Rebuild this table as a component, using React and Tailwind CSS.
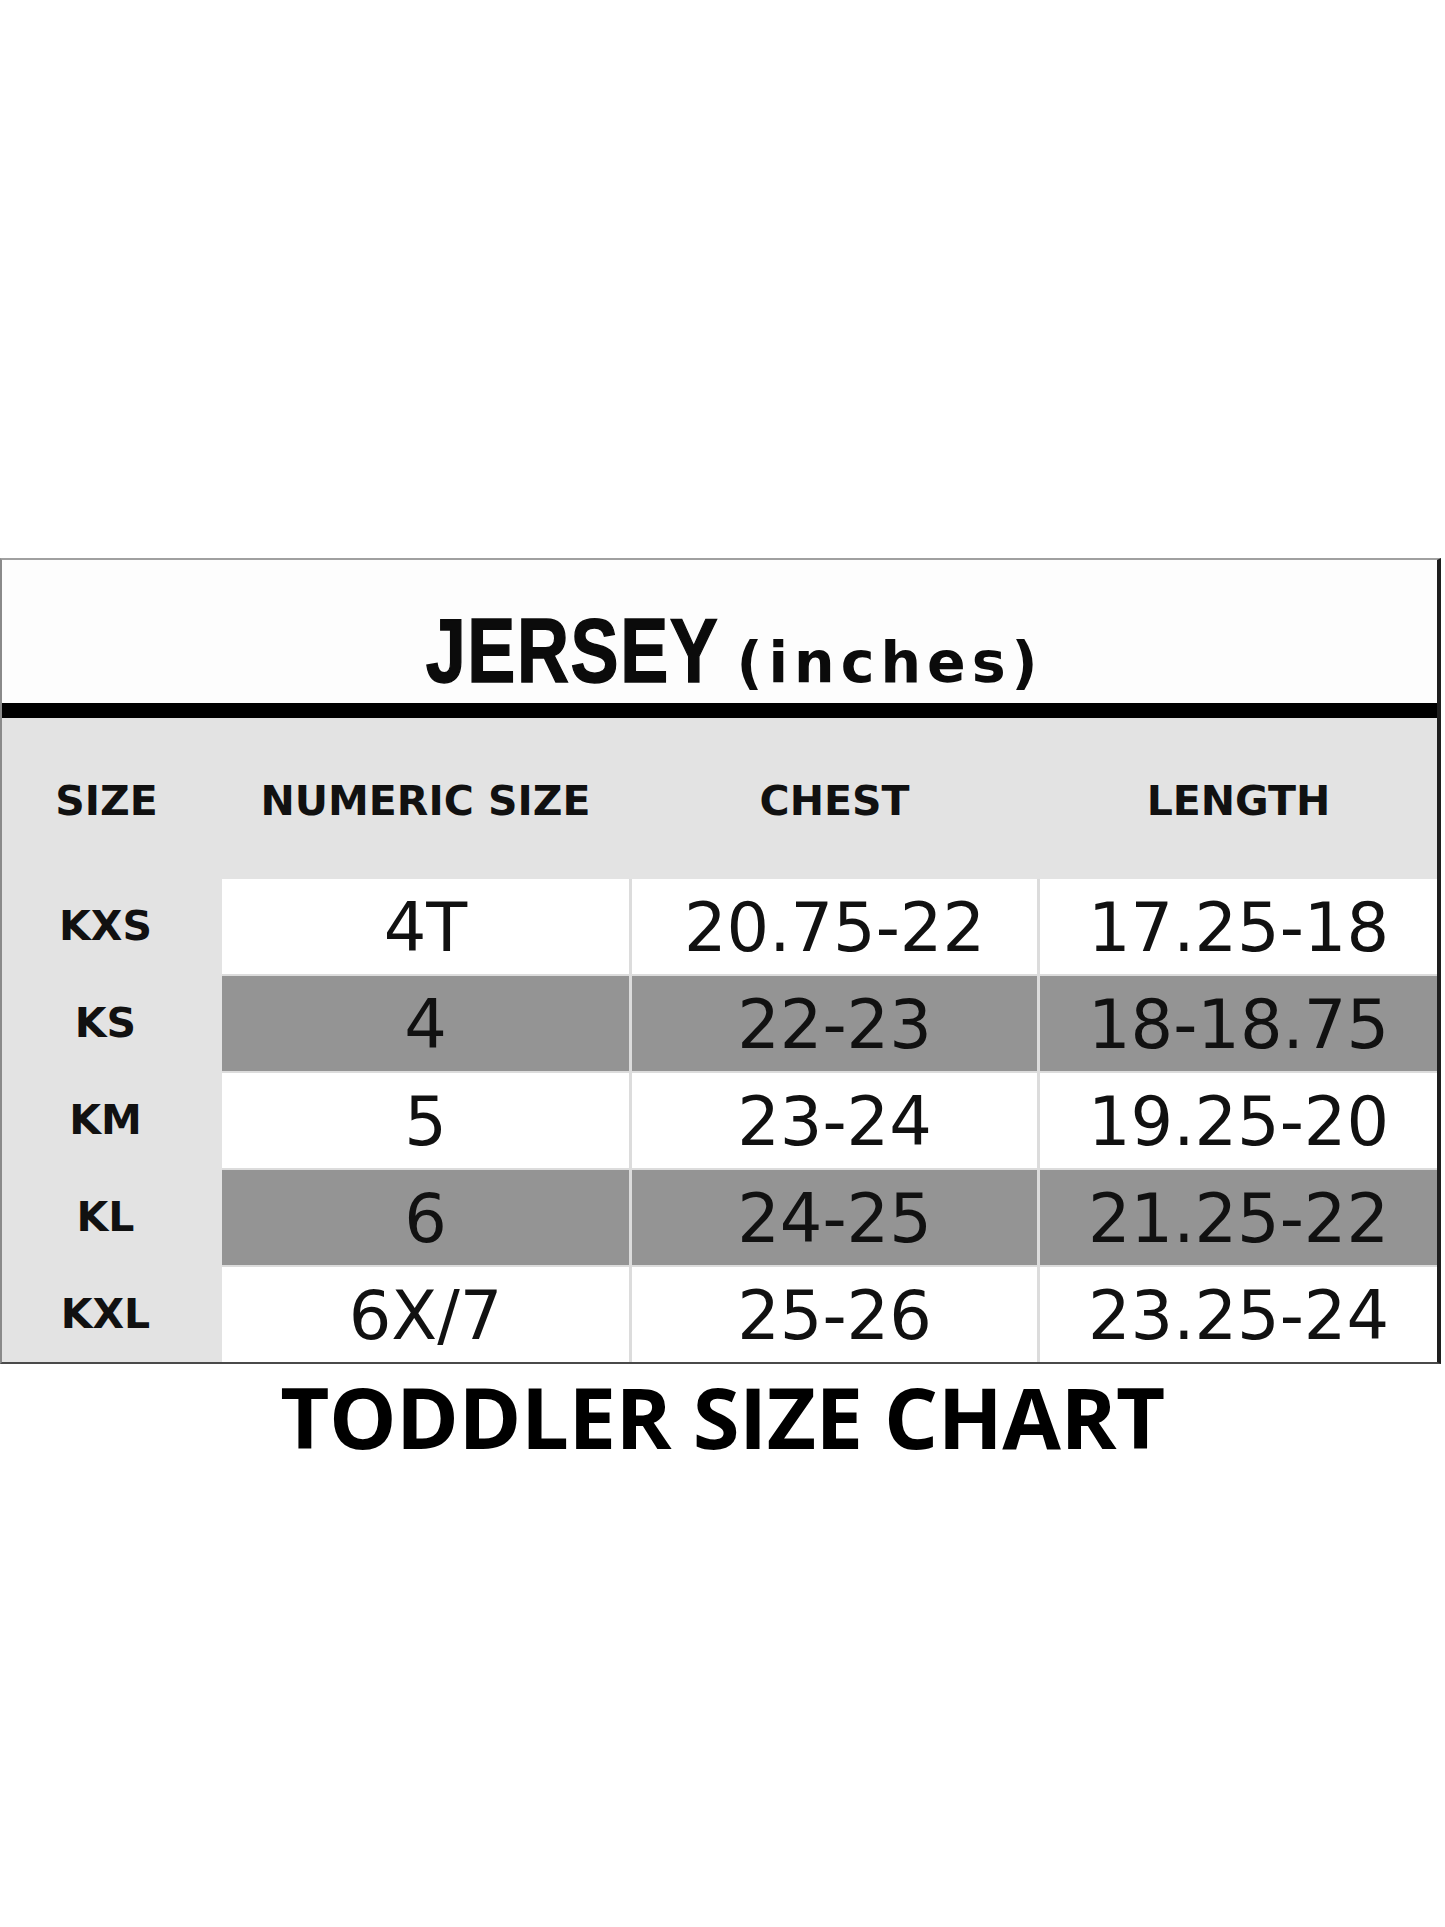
import React from 'react';

const ROWS = [
    { size: 'KXS', numeric: '4T', chest: '20.75-22', length: '17.25-18', dark: false },
    { size: 'KS', numeric: '4', chest: '22-23', length: '18-18.75', dark: true },
    { size: 'KM', numeric: '5', chest: '23-24', length: '19.25-20', dark: false },
    { size: 'KL', numeric: '6', chest: '24-25', length: '21.25-22', dark: true },
    { size: 'KXL', numeric: '6X/7', chest: '25-26', length: '23.25-24', dark: false }
];

const HEAD_FONT = { fontFamily: '"DejaVu Sans", "Liberation Sans", sans-serif' };

const App = () => {
    return (
        <div className="min-h-[1927px] w-[1445px] bg-white pt-[558px]">
            {/* chart box */}
            <div className="mr-[4px] border-t-2 border-l-2 border-r-4 border-b-2 border-t-[#a0a0a0] border-l-[#8a8a8a] border-r-[#1e1e1e] border-b-[#4a4a4a]">
                <div className="h-[143px] bg-[#fdfdfd] flex items-baseline justify-center pt-[46px] pl-[30px]">
                    <span
                        className="inline-block -mx-[36px] scale-x-[0.8] text-[90px] leading-none font-bold text-[#0b0b0b] tracking-[2px] [-webkit-text-stroke:1.5px_#0b0b0b]"
                        style={{ fontFamily: '"Liberation Sans", Arial, sans-serif' }}
                    >
                        JERSEY
                    </span>
                    <span
                        className="ml-[16px] text-[57px] leading-none font-bold text-[#0b0b0b] tracking-[6px]"
                        style={HEAD_FONT}
                    >
                        (inches)
                    </span>
                </div>

                <div className="h-[15px] bg-black" />

                <div className="bg-[#e3e3e3]">
                    <div
                        className="h-[161px] pt-[6px] grid grid-cols-[217px_407px_405px_1fr] gap-x-[3px] items-center text-[41px] font-bold text-[#111]"
                        style={HEAD_FONT}
                    >
                        <div className="text-center pr-[8px]">SIZE</div>
                        <div className="text-center">NUMERIC SIZE</div>
                        <div className="text-center">CHEST</div>
                        <div className="text-center">LENGTH</div>
                    </div>

                    <div className="flex">
                        <div className="w-[217px] pr-[10px] flex flex-col gap-y-[2px]">
                            {ROWS.map((row) => (
                                <div
                                    key={row.size}
                                    className="h-[95px] flex items-center justify-center text-[41px] font-bold text-[#111]"
                                    style={HEAD_FONT}
                                >
                                    {row.size}
                                </div>
                            ))}
                        </div>

                        <div className="flex-1 ml-[3px] grid grid-cols-[407px_405px_1fr] gap-x-[3px] gap-y-[2px] bg-[#dcdcdc]">
                            {ROWS.map((row) =>
                                [row.numeric, row.chest, row.length].map((val, i) => (
                                    <div
                                        key={row.size + i}
                                        className={
                                            'h-[95px] pt-[4px] flex items-center justify-center text-[67px] leading-none text-[#111] ' +
                                            (row.dark ? 'bg-[#949494]' : 'bg-white')
                                        }
                                        style={HEAD_FONT}
                                    >
                                        {val}
                                    </div>
                                ))
                            )}
                        </div>
                    </div>
                </div>
            </div>

            <div
                className="mt-[10px] text-center text-[85px] leading-none font-bold text-black tracking-[-0.5px]"
                style={{ fontFamily: '"Open Sans", "Liberation Sans", sans-serif' }}
            >
                TODDLER SIZE CHART
            </div>
        </div>
    );
};

export default App;
